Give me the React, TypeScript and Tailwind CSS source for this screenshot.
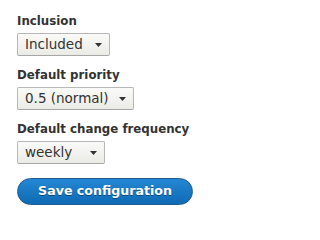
const FIELDS = [
  { label: 'Inclusion', value: 'Included', width: 'w-[93px]' },
  { label: 'Default priority', value: '0.5 (normal)', width: 'w-[117px]' },
  { label: 'Default change frequency', value: 'weekly', width: 'w-[88px]' },
]

function FakeSelect({ value, width }: { value: string; width: string }) {
  return (
    <div
      className={`${width} h-[23px] flex items-center justify-between pl-[7px] pr-[7px] rounded-[2px] border border-[#b8b8b8] border-b-[#a6a6a6] bg-gradient-to-b from-[#fafaf8] to-[#ebebe6] text-[13.5px] text-[#333] leading-none`}
    >
      <span className="mt-px">{value}</span>
      <svg width="7" height="4" viewBox="0 0 7 4" className="mt-px">
        <path d="M0 0h7L3.5 4z" fill="#333" />
      </svg>
    </div>
  )
}

export default function App() {
  return (
    <div className="w-[291px] h-[230px] bg-white pl-[17px] pt-[13px] font-['DejaVu_Sans',sans-serif] text-[#333]">
      {FIELDS.map(f => (
        <div key={f.label} className="mb-[11px]">
          <div className="text-[11.8px] font-bold leading-[16px] mb-[4px]">{f.label}</div>
          <FakeSelect value={f.value} width={f.width} />
        </div>
      ))}
      <button className="mt-[3px] w-[176px] h-[27px] rounded-full border border-[#1e5c90] bg-gradient-to-b from-[#2587d4] to-[#0e6ab3] text-white text-[12.6px] font-bold leading-none [text-shadow:0_1px_0_rgba(0,0,0,0.4)]">
        Save configuration
      </button>
    </div>
  )
}
